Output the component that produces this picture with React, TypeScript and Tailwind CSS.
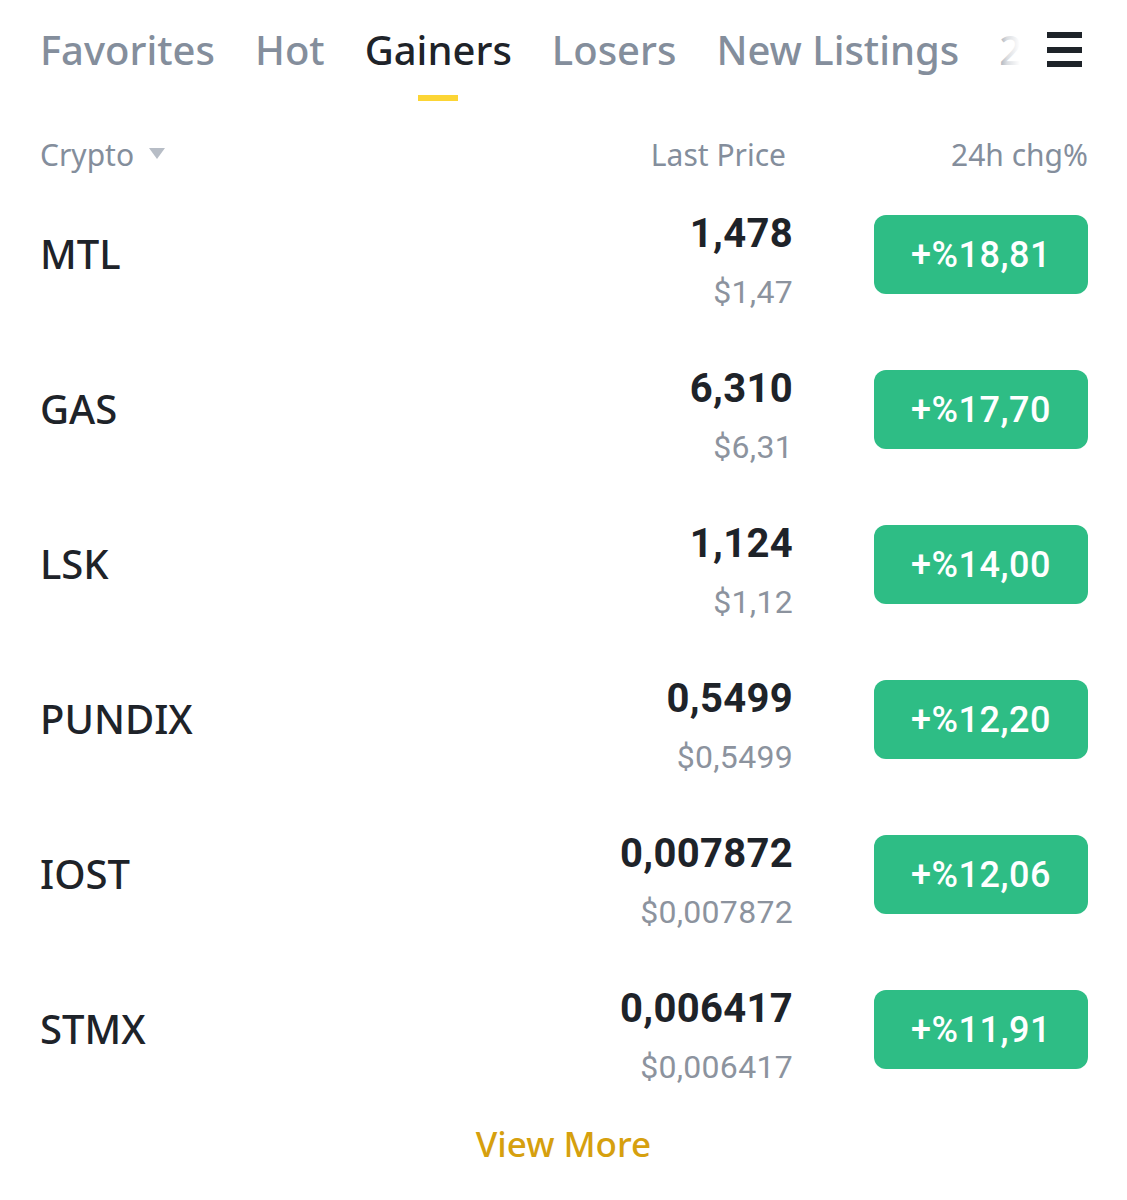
import React from "react";

const rows = [
  { sym: "MTL", price: "1,478", usd: "$1,47", chg: "+%18,81" },
  { sym: "GAS", price: "6,310", usd: "$6,31", chg: "+%17,70" },
  { sym: "LSK", price: "1,124", usd: "$1,12", chg: "+%14,00" },
  { sym: "PUNDIX", price: "0,5499", usd: "$0,5499", chg: "+%12,20" },
  { sym: "IOST", price: "0,007872", usd: "$0,007872", chg: "+%12,06" },
  { sym: "STMX", price: "0,006417", usd: "$0,006417", chg: "+%11,91" },
];

const tabs = ["Favorites", "Hot", "Gainers", "Losers", "New Listings", "24h Vol"];

export default function App() {
  return (
    <div
      className="w-[1127px] h-[1200px] bg-white overflow-hidden text-[#1E2329]"
      style={{ fontFamily: '"Noto Sans", "Open Sans", sans-serif' }}
    >
      {/* Tabs */}
      <div className="flex items-start pl-10 pr-[45px] pt-[22px] h-[101px]">
        <div className="relative flex-1 overflow-hidden">
          <div className="flex gap-[40px] whitespace-nowrap">
            {tabs.map((t) => (
              <div key={t} className="flex flex-col items-center shrink-0">
                <span
                  className={`text-[40px] leading-[56px] font-medium ${
                    t === "Gainers" ? "text-[#1E2329]" : "text-[#848E9C]"
                  }`}
                >
                  {t}
                </span>
                {t === "Gainers" ? (
                  <div className="mt-[17px] h-[6px] w-10 bg-[#FCD535]" />
                ) : null}
              </div>
            ))}
          </div>
          <div className="absolute right-0 top-0 h-[56px] w-[26px] bg-gradient-to-r from-white/0 via-white/70 to-white" />
        </div>
        <div className="ml-[27px] mt-[10px] flex w-[35px] flex-col gap-[8.5px]">
          <div className="h-[6px] w-[35px] bg-[#1E2329]" />
          <div className="h-[6px] w-[35px] bg-[#1E2329]" />
          <div className="h-[6px] w-[35px] bg-[#1E2329]" />
        </div>
      </div>

      {/* Header */}
      <div className="mt-[36px] flex h-[36px] items-center pl-10 pr-[39px] text-[30px] leading-[36px] text-[#848E9C]">
        <div className="flex flex-1 items-center">
          <span>Crypto</span>
          <svg width="16" height="11" viewBox="0 0 16 11" className="ml-[15px] mt-[-4px]">
            <path d="M0 0 H16 L8 11 Z" fill="#B7BDC6" />
          </svg>
        </div>
        <span className="mr-[7px]">Last Price</span>
        <span className="ml-[81px] w-[214px] text-right">24h chg%</span>
      </div>

      {/* Rows */}
      <div className="mt-[4px] flex flex-col pl-10 pr-[39px]">
        {rows.map((r) => (
          <div key={r.sym} className="flex h-[155px] items-center">
            <div className="mb-[2px] flex-1 text-[40px] font-medium leading-[48px] text-[#1E2329]">
              {r.sym}
            </div>
            <div
              className="mt-[12px] flex flex-col items-end"
              style={{ fontFamily: 'Roboto, "Liberation Sans", sans-serif' }}
            >
              <span className="text-[40px] font-bold leading-[44px] tracking-[0.3px] text-[#1E2329]">
                {r.price}
              </span>
              <span className="mt-[18px] text-[32px] leading-[36px] tracking-[0.3px] text-[#8C939E]">
                {r.usd}
              </span>
            </div>
            <div
              className="ml-[81px] flex h-[79px] w-[214px] items-center justify-center rounded-[12px] bg-[#2EBD85] text-[36px] font-medium tracking-[0.5px] text-white"
              style={{ fontFamily: 'Roboto, "Liberation Sans", sans-serif' }}
            >
              {r.chg}
            </div>
          </div>
        ))}
      </div>

      {/* View more */}
      <div className="mt-[15px] flex justify-center">
        <span className="text-[35px] font-medium leading-[44px] text-[#D6A00E]">View More</span>
      </div>
    </div>
  );
}
